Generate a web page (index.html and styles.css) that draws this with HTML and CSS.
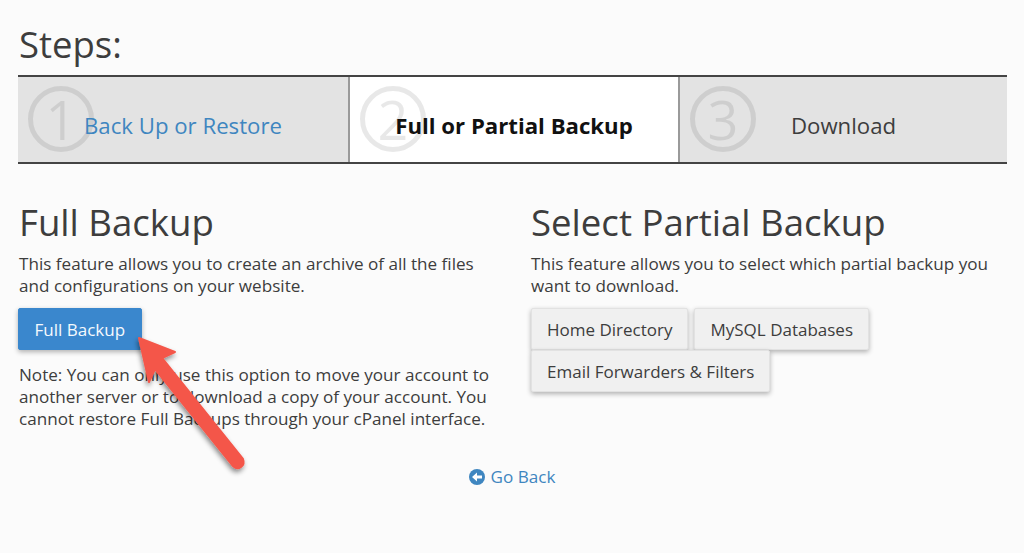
FILE: index.html
```html
<!DOCTYPE html>
<html lang="en">
<head>
    <meta charset="UTF-8">
    <title>Backup Wizard</title>
    <link rel="stylesheet" href="styles.css">
</head>
<body>
    <h1 class="title">Steps:</h1>
    <!-- wizard steps -->
    <div class="steps">
        <div class="step">
            <span class="step_num">1</span>
            <a class="step_label" href="#">Back Up or Restore</a>
        </div>
        <div class="step step_active">
            <span class="step_num">2</span>
            <span class="step_label">Full or Partial Backup</span>
        </div>
        <div class="step">
            <span class="step_num">3</span>
            <span class="step_label">Download</span>
        </div>
    </div>

    <div class="cols">
        <section class="col_left">
            <h2 class="col_title">Full Backup</h2>
            <p class="desc">This feature allows you to create an archive of all the files and configurations on your website.</p>
            <div class="btn_row">
                <button class="btn btn_primary">Full Backup</button>
            </div>
            <p class="note">Note: You can only use this option to move your account to another server or to download a copy of your account. You cannot restore Full Backups through your cPanel interface.</p>
        </section>
        <section class="col_right">
            <h2 class="col_title">Select Partial Backup</h2>
            <p class="desc">This feature allows you to select which partial backup you want to download.</p>
            <div class="btn_row btn_wrap">
                <button class="btn">Home Directory</button>
                <button class="btn">MySQL Databases</button>
                <button class="btn">Email Forwarders &amp; Filters</button>
            </div>
        </section>
    </div>

    <div class="back">
        <a href="#" class="back_link">
            <svg class="back_icon" viewBox="0 0 16 16" width="16" height="16">
                <circle cx="8" cy="8" r="8" fill="#3f86c0"/>
                <path d="M3 8 L8 3.6 V6.4 H13 V9.6 H8 V12.4 Z" fill="#fff"/>
            </svg>
            Go Back
        </a>
    </div>

    <!-- red annotation arrow on top of the page -->
    <svg class="arrow" viewBox="0 0 1024 553" width="1024" height="553">
        <defs>
            <filter id="arrow_shadow" x="-30%" y="-30%" width="160%" height="160%">
                <feDropShadow dx="-1" dy="3" stdDeviation="2.5" flood-color="#000" flood-opacity="0.45"/>
            </filter>
        </defs>
        <path filter="url(#arrow_shadow)" fill="#f4574a" stroke="#f4574a" stroke-width="2" stroke-linejoin="round"
              d="M139 338 L175 352 L162 358 L243 459 Q245 464 241 467 Q237 470 233 466 L155 369 L149 382 Z"/>
    </svg>
</body>
</html>
```

FILE: styles.css
```css
*{
    box-sizing: border-box;
}
body{
    margin: 0;
    padding: 20px 17px 0 18px;
    height: 553px;
    overflow: hidden;
    position: relative;
    background-color: #fbfbfb;
    font-family: "Open Sans", sans-serif;
    color: #3d3d3d;
}
a{
    color: #3f86c0; text-decoration: none;
}
.title{
    margin: 0 0 7px 1px;
    font-size: 36.5px; line-height: 48px; font-weight: 400;
}
.steps{
    display: grid;
    grid-template-columns: 330px 330px 329px;
    height: 89px;
    border-top: 2px solid #444444;
    border-bottom: 2px solid #444444;
}
.step{
    position: relative;
    display: flex; align-items: center; justify-content: center;
    background-color: #e3e3e3;
    font-size: 22.2px;
    padding-top: 11px;
    border-left: 2px solid #9a9a9a;
}
.step:first-child{
    border-left: 0;
}
.step_active{
    background-color: #ffffff;
    font-weight: 700;
    color: #111111;
}
.step_num{ /* big faded number behind the label */
    position: absolute; left: 10px; top: 9px;
    width: 66px; height: 66px;
    border: 5px solid rgba(0,0,0,0.09); border-radius: 50%;
    display: flex; align-items: center; justify-content: center;
    font-size: 54px; font-weight: 400; line-height: 1;
    color: rgba(0,0,0,0.09);
}
.step_label{
    position: relative;
}
.cols{
    display: flex;
    padding: 0 1px;
    margin-top: 34px;
}
.col_left{
    width: 512px;
    padding-right: 32px;
}
.col_right{
    flex: 1;
    padding-right: 10px;
}
.col_title{
    margin: 0 0 7px 0;
    font-size: 36.6px; line-height: 48px; font-weight: 400;
}
.desc, .note{
    margin: 0;
    font-size: 17.1px; line-height: 22px;
}
.btn_row{
    margin: 11px 0 14px -1px;
}
.btn_wrap{
    display: flex; flex-wrap: wrap;
    gap: 0 6px;
    margin-left: 0;
    width: 400px;
}
.btn{
    height: 42px;
    padding: 0 15px;
    border: 1px solid #e2e2e2; border-radius: 2px;
    background-color: #f0f0f0;
    box-shadow: 0 2px 5px rgba(0,0,0,0.3);
    font-family: "Open Sans", sans-serif;
    font-size: 17px;
    color: #3d3d3d;
}
.btn_primary{
    padding: 0 15.5px;
    background-color: #3a87cd;
    border-color: #3a87cd;
    color: #f4f9fd;
}
.back{
    margin-top: 35px;
    text-align: center;
    font-size: 17.1px;
    padding-right: 1px;
}
.back_link{
    display: inline-flex; align-items: center; gap: 6px;
}
.arrow{
    position: absolute; left: 0; top: 0;
    pointer-events: none;
}
```
